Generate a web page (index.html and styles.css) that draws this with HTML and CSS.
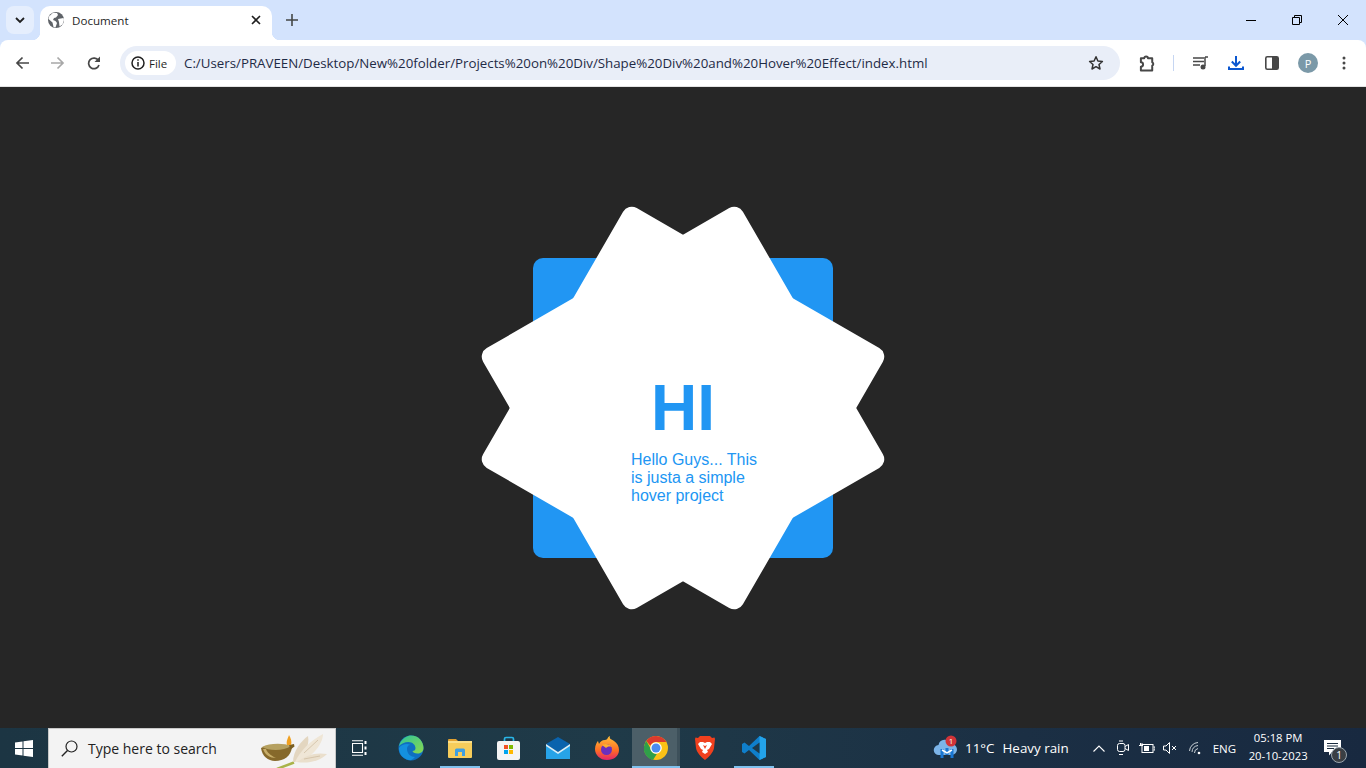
FILE: index.html
```html
<!DOCTYPE html>
<html lang="en">
<head>
    <meta charset="UTF-8">
    <title>Document</title>
    <link rel="stylesheet" href="styles.css">
</head>
<body>
    <!-- Tab strip -->
    <div class="tabstrip">
        <div class="tab-search">
            <svg width="12" height="12" viewBox="0 0 12 12"><path d="M2 4l4 4 4-4" fill="none" stroke="#1f1f1f" stroke-width="1.8"/></svg>
        </div>
        <div class="tab">
            <svg class="tab-globe" width="16" height="16" viewBox="0 0 16 16"><circle cx="8" cy="8" r="8" fill="#5f6368"/><path d="M5 .8l4 .2 1 2-2 2.500-2 .5-1 2 2.500 1 1.500 2-1.500 4.500-2-.5-1-4.500-4-3.500.5-2.500zM10 7l5.500-1 .5 2-1.500 4.500-3 2-.5-4.500z" fill="#fff"/></svg>
            <span class="tab-title">Document</span>
            <svg class="tab-close" width="10" height="10" viewBox="0 0 10 10"><path d="M1 1l8 8M9 1l-8 8" stroke="#1f1f1f" stroke-width="1.600"/></svg>
        </div>
        <svg class="new-tab" width="12" height="12" viewBox="0 0 12 12"><path d="M6 0v12M0 6h12" stroke="#444746" stroke-width="1.600"/></svg>
        <div class="window-btns">
            <svg width="12" height="12" viewBox="0 0 12 12"><path d="M1 6.500h10" stroke="#000" stroke-width="1"/></svg>
            <svg width="12" height="12" viewBox="0 0 12 12"><path d="M1.500 3.500h7v7h-7zM3.500 3.500v-2h7v7h-2" fill="none" stroke="#000"/></svg>
            <svg width="12" height="12" viewBox="0 0 12 12"><path d="M1 1l10 10M11 1l-10 10" stroke="#000" stroke-width="1"/></svg>
        </div>
    </div>

    <!-- Toolbar -->
    <div class="toolbar">
        <svg class="nav-icon" width="14" height="14" viewBox="0 0 14 14"><path d="M14 7H2M7.500 1.500L2 7l5.500 5.500" fill="none" stroke="#474747" stroke-width="1.700"/></svg>
        <svg class="nav-icon" width="14" height="14" viewBox="0 0 14 14"><path d="M0 7h12M6.500 1.500L12 7l-5.500 5.500" fill="none" stroke="#a8a8a8" stroke-width="1.700"/></svg>
        <svg class="nav-icon" width="14" height="14" viewBox="0 0 14 14"><path d="M12 9a5.300 5.300 0 1 1-.6-4.500" fill="none" stroke="#474747" stroke-width="1.700"/><path d="M13 0.500v5.500H7.500z" fill="#474747"/></svg>
        <div class="omnibox">
            <div class="file-chip">
                <svg width="14" height="14" viewBox="0 0 14 14"><circle cx="7" cy="7" r="6" fill="none" stroke="#1f1f1f" stroke-width="1.500"/><path d="M7 6v4.500M7 3.300v1.500" stroke="#1f1f1f" stroke-width="1.500"/></svg>
                <span>File</span>
            </div>
            <span class="url">C:/Users/PRAVEEN/Desktop/New%20folder/Projects%20on%20Div/Shape%20Div%20and%20Hover%20Effect/index.html</span>
            <svg class="star" width="16" height="16" viewBox="0 0 16 16"><path d="M8 1.800l1.900 4.200 4.500.5-3.400 3 1 4.500L8 11.700 4 14l1-4.500-3.400-3 4.500-.5z" fill="none" stroke="#333" stroke-width="1.500" stroke-linejoin="round"/></svg>
        </div>
        <div class="toolbar-icons">
            <svg class="slot-ext" width="17" height="17" viewBox="0 0 18 18"><path d="M2 3.500h3.500a2 2 0 0 1 4 0h4.500v4.200a2 2 0 0 1 0 3.600v5H2v-4a2.300 2.300 0 0 0 0-4.600z" fill="none" stroke="#474747" stroke-width="2.100" stroke-linejoin="round"/></svg>
            <span class="divider"></span>
            <svg class="slot-media" width="16" height="14" viewBox="0 0 16 14"><path d="M0 2h11M0 5.500h11M0 9h7" stroke="#474747" stroke-width="1.500"/><path d="M12 1v9" stroke="#474747" stroke-width="1.500"/><path d="M12 1h3" stroke="#474747" stroke-width="1.500"/><circle cx="10" cy="11" r="2.500" fill="#474747"/></svg>
            <svg class="slot-down" width="16" height="16" viewBox="0 0 16 16"><path d="M8 1v9M3.800 6.500L8 10.800l4.200-4.300" fill="none" stroke="#0b57d0" stroke-width="2"/><path d="M1 11.500v2.500h14v-2.500" fill="none" stroke="#0b57d0" stroke-width="2"/></svg>
            <svg class="slot-side" width="14" height="14" viewBox="0 0 14 14"><rect x=".8" y=".8" width="12.400" height="12.400" rx="1.500" fill="none" stroke="#474747" stroke-width="1.600"/><rect x="7" y="1" width="6" height="12" fill="#474747"/></svg>
            <span class="avatar">P</span>
            <svg class="slot-menu" width="4" height="14" viewBox="0 0 4 14"><circle cx="2" cy="2" r="1.500" fill="#474747"/><circle cx="2" cy="7" r="1.500" fill="#474747"/><circle cx="2" cy="12" r="1.500" fill="#474747"/></svg>
        </div>
    </div>

    <!-- Page -->
    <main class="page">
        <div class="shape-box">
            <div class="shape-content">
                <h2>HI</h2>
                <p>Hello Guys... This is justa a simple hover project</p>
            </div>
        </div>
    </main>

    <!-- Taskbar -->
    <footer class="taskbar">
        <div class="start">
            <svg width="18" height="17" viewBox="0 0 18 17"><path d="M0 2.500L7.500 1.400V8H0zM8.500 1.300L18 0v8H8.500zM0 9h7.500v6.600L0 14.500zM8.500 9H18v8l-9.500-1.300z" fill="#fff"/></svg>
        </div>
        <div class="search">
            <svg class="search-glass" width="17" height="17" viewBox="0 0 17 17"><circle cx="10.500" cy="6.500" r="5.500" fill="none" stroke="#222" stroke-width="1.200"/><path d="M6.500 10.500L.8 16.300" stroke="#222" stroke-width="1.400"/></svg>
            <span>Type here to search</span>
            <svg class="diya" width="70" height="40" viewBox="0 0 70 40">
                <path d="M17 40L34 33.500" stroke="#a9b34a" stroke-width="2.500" fill="none"/>
                <path d="M33 33C33 22 41 12 48 7 50 16 44 28 36 33z" fill="#e3d6c0"/>
                <path d="M35 33C40 22 50 12 63 5 63 16 50 30 38 33z" fill="#efe6d6"/>
                <path d="M37 33C46 26 56 23 67 25 60 32 48 35 37 33z" fill="#eadfcc"/>
                <path d="M44 24L58 11M44 30L60 27" stroke="#cbb99c" stroke-width=".7" fill="none"/>
                <path d="M1 19C8 15 24 15 32 18 31 27 24 32 15 32 8 32 2 27 1 19z" fill="#86692b"/>
                <path d="M3 20C5 26 10 29 16 29 10 26 7 23 6 20z" fill="#c7ad68"/>
                <path d="M2 18C9 14 24 14 31 17 24 22 9 22 2 18z" fill="#b5a060"/>
                <path d="M29 16l5-1 .5 2.500-4 3z" fill="#7a5f22"/>
                <path d="M27 16C26 12 28 9 29 6 31 9 32 13 31 16z" fill="#f0a020"/>
            </svg>
        </div>
        <div class="task-view">
            <svg width="16" height="16" viewBox="0 0 16 16"><path d="M.5 3.500h10v9h-10zM0 .8h11M0 15.200h11" fill="none" stroke="#fff" stroke-width="1.100"/><path d="M13.500 1v3M13.500 6.500v3M13.500 12v3" stroke="#fff" stroke-width="2"/></svg>
        </div>
        <div class="task-apps">
            <div class="app">
                <svg width="26" height="26" viewBox="0 0 26 26"><defs><linearGradient id="edge" x1="0" y1="0" x2="1" y2="1"><stop offset="0" stop-color="#2dc49a"/><stop offset="1" stop-color="#8ad84e"/></linearGradient></defs><circle cx="13" cy="13" r="12.500" fill="#0f6fc0"/><path d="M1 11C3 3 10 .5 13 .5 21 .5 25.500 7 25.500 13c0 3-2 5.500-6 5.500-3 0-5-1.500-5-2.500 2 0 3-1 3-3 0-3-3-6-7-6-4 0-7.500 2-9.500 4z" fill="url(#edge)"/><path d="M9 14c0 5 4 8 8 8-2 2.500-4 3.500-6 3C5 24 1 19 1 13c2-3 5-4 8-4 2 0 3 1 3 1-2 0-3 2-3 4z" fill="#1490df"/></svg>
            </div>
            <div class="app open">
                <svg width="24" height="20" viewBox="0 0 24 20"><path d="M0 2a1 1 0 0 1 1-1h7l2 2h-10z" fill="#e0a030"/><rect y="3" width="24" height="17" rx="1" fill="#f6cd5b"/><rect x="0" y="3" width="24" height="2" fill="#fbe08a"/><path d="M7 18v-6a1.500 1.500 0 0 1 1.500-1.500h7A1.500 1.500 0 0 1 17 12v6h-3v-4h-4v4z" fill="#3f9fe0"/></svg>
            </div>
            <div class="app">
                <svg width="24" height="24" viewBox="0 0 24 24"><path d="M7.500 7V3a1.500 1.500 0 0 1 1.500-1.500h6A1.500 1.500 0 0 1 16.500 3v4" fill="none" stroke="#29b6e8" stroke-width="1.700"/><rect y="5" width="23" height="19" rx="2" fill="#f4f4f4"/><rect x="7" y="9" width="4" height="4" fill="#f25022"/><rect x="12" y="9" width="4" height="4" fill="#7fba00"/><rect x="7" y="14" width="4" height="4" fill="#00a4ef"/><rect x="12" y="14" width="4" height="4" fill="#ffb900"/></svg>
            </div>
            <div class="app">
                <svg width="24" height="22" viewBox="0 0 24 22"><path d="M0 7L12 0l12 7-12 8z" fill="#0a63ad"/><path d="M0 7l12 8 12-8v3L12 18 0 10z" fill="#d9eefa"/><path d="M0 9l12 8 12-8v13H0z" fill="#27a3e8"/></svg>
            </div>
            <div class="app">
                <svg width="24" height="24" viewBox="0 0 24 24"><defs><linearGradient id="fox" x1="0" y1="0" x2="0" y2="1"><stop offset="0" stop-color="#ffc13a"/><stop offset=".6" stop-color="#ff6d24"/><stop offset="1" stop-color="#e3246b"/></linearGradient></defs><path d="M12 24C5 24 0 19 0 13 0 9 2 6 3 5l1 3c1-2 3-4 6-4 3 0 2-3 5-4-1 3 1 3 4 5 3 2 5 5 5 9 0 6-5 10-12 10z" fill="url(#fox)"/><circle cx="11.500" cy="13.500" r="5.500" fill="#6b2fbd"/><path d="M7 9c3-2 8-1 10 2-3-1-5 0-6 1-1-1-3-2-4-3z" fill="#ffb02e"/></svg>
            </div>
            <div class="app active open">
                <svg width="24" height="24" viewBox="0 0 24 24"><circle cx="12" cy="12" r="12" fill="#fbc116"/><path d="M12 0a12 12 0 0 1 10.400 6H12a6 6 0 0 0-5.600 3.700L2.300 5A12 12 0 0 1 12 0z" fill="#db3a2e"/><path d="M2.300 5l5 8.700a5.500 5.500 0 0 0 5.500 4.200L9 24A12 12 0 0 1 2.300 5z" fill="#2f9f49"/><circle cx="12" cy="12" r="5.800" fill="#fff"/><circle cx="12" cy="12" r="4.500" fill="#4a8cf0"/></svg>
            </div>
            <div class="app">
                <svg width="20" height="24" viewBox="0 0 20 24"><path d="M5 0h10l2 2 2.500-.5L20 3l-1 9c-.5 4-5 9-9 12-4-3-8.500-8-9-12L0 3l.5-1.500L3 2z" fill="#f0401e"/><path d="M5 6h3l2 1 2-1h3l2 2-3 5-2 1 1 2-3 2-3-2 1-2-2-1-3-5z" fill="#fff"/><path d="M8 9l2 1 2-1-2 4z" fill="#f0401e"/></svg>
            </div>
            <div class="app open">
                <svg width="24" height="24" viewBox="0 0 24 24"><path d="M17.500 0L24 3v18l-6.500 3L7 14l-4.500 3.500L0 16V8l2.500-1.500L7 10z" fill="#0f7fcb"/><path d="M17.500 0L24 3v18l-6.500 3V0z" fill="#23a3ea"/><path d="M17.500 6.500V17.500L10 12z" fill="#1d3a4a"/></svg>
            </div>
        </div>
        <div class="tray">
            <div class="weather">
                <svg width="26" height="26" viewBox="0 0 26 26"><path d="M6 20a5 5 0 0 1-.5-10A6.500 6.500 0 0 1 18 9a5.500 5.500 0 0 1 1 11z" fill="#7cb4e8"/><path d="M9 14v9M14 13v7M19 14v9" stroke="#1976d2" stroke-width="3"/><path d="M9 15l5 3 5-3" stroke="#fff" stroke-width="1.500" fill="none"/><circle cx="18" cy="6" r="5.500" fill="#d13438"/></svg>
                <span class="weather-badge">1</span>
            </div>
            <span class="temp">11°C</span>
            <span class="cond">Heavy rain</span>
            <svg class="tray-caret" width="12" height="7" viewBox="0 0 12 7"><path d="M.5 6.500L6 1l5.500 5.500" fill="none" stroke="#fff" stroke-width="1.100"/></svg>
            <svg class="tray-meet" width="12" height="16" viewBox="0 0 12 16"><rect x=".5" y="3.500" width="7.500" height="8" rx="2" fill="none" stroke="#fff"/><path d="M8 6.500l3.500-2v6l-3.500-2M2 1h4M2 14.500h4" fill="none" stroke="#fff"/></svg>
            <svg class="tray-batt" width="16" height="12" viewBox="0 0 16 12"><rect x="3" y="2.500" width="11" height="8" fill="none" stroke="#fff"/><rect x="5" y="4" width="5" height="5" fill="#fff"/><path d="M14.500 5h1.500v3h-1.500M0 3.500h4M1.500 1v2.500M3 1v2.500" stroke="#fff" fill="none"/></svg>
            <svg class="tray-vol" width="14" height="12" viewBox="0 0 14 12"><path d="M.5 4h2.500l3.500-3.500v11L3 8H.5z" fill="none" stroke="#fff"/><path d="M9 4l4 4M13 4l-4 4" stroke="#fff"/></svg>
            <svg class="tray-wifi" width="13" height="13" viewBox="0 0 13 13"><path d="M.5 9A9 9 0 0 1 9 .5M3 10a7 7 0 0 1 6-6.500M5.500 11A4.500 4.500 0 0 1 9 6.500" fill="none" stroke="#c9d1d6"/><circle cx="10" cy="11" r="1.300" fill="#fff"/></svg>
            <span class="lang">ENG</span>
            <div class="clock"><span>05:18 PM</span><span>20-10-2023</span></div>
            <div class="notif">
                <svg width="17" height="16" viewBox="0 0 17 16"><path d="M0 0h17v12H8l-3 3.500V12H0z" fill="#fff"/><path d="M3 3.500h11M3 6h11M3 8.500h7" stroke="#1b2c3f"/></svg>
                <span class="notif-badge">1</span>
            </div>
        </div>
    </footer>
</body>
</html>
```

FILE: styles.css
```css
* {
    box-sizing: border-box;
}
html, body {
    height: 100%;
}
body {
    margin: 0;
    display: flex;
    flex-direction: column;
    height: 768px;
    overflow: hidden;
    background-color: #d3e3fd;
    font-family: "Open Sans", "Liberation Sans", sans-serif;
}

/* tab strip */
.tabstrip {
    height: 40px;
    flex: none;
    display: flex;
    align-items: flex-end;
    background-color: #d3e3fd;
}
.tab-search {
    width: 28px;
    height: 28px;
    margin: 0 6px 6px 6px;
    display: flex;
    align-items: center;
    justify-content: center;
    border-radius: 8px;
    background-color: #e5eefd;
}
.tab {
    position: relative;
    width: 232px;
    height: 34px;
    display: flex;
    align-items: center;
    padding: 0 11px 6px 8px;
    background-color: #fff;
    border-radius: 10px 10px 0 0;
}
.tab::before, .tab::after {
    content: "";
    position: absolute;
    bottom: 0;
    width: 8px;
    height: 8px;
    background: radial-gradient(circle at 0 0, #d3e3fd 8px, #fff 8.500px);
}
.tab::before {
    left: -8px;
}
.tab::after {
    right: -8px;
    background: radial-gradient(circle at 100% 0, #d3e3fd 8px, #fff 8.500px);
}
.tab-title {
    flex: 1;
    margin-left: 8px;
    font-size: 11.600px;
    color: #1f1f1f;
}
.new-tab {
    margin: 0 0 14px 14px;
}
.window-btns {
    margin-left: auto;
    display: flex;
    gap: 34px;
    padding: 0 17px 14px 0;
}

/* toolbar */
.toolbar {
    height: 47px;
    flex: none;
    display: flex;
    align-items: center;
    padding-left: 15px;
    background-color: #fff;
    border-radius: 8px 8px 0 0;
    border-bottom: 1px solid #e3e3e3;
}
.nav-icon {
    margin-right: 22px;
    flex: none;
}
.omnibox {
    width: 1000px;
    height: 34px;
    margin-left: -3px;
    flex: none;
    display: flex;
    align-items: center;
    padding: 0 16px 0 5px;
    border-radius: 17px;
    background-color: #e9eef8;
}
.file-chip {
    width: 51px;
    height: 24px;
    display: flex;
    align-items: center;
    gap: 4px;
    padding-left: 6px;
    border-radius: 12px;
    background-color: #fff;
    font-size: 11.500px;
    color: #1f1f1f;
}
.url {
    margin-left: 8px;
    font-size: 13.300px;
    color: #1f2b46;
    white-space: nowrap;
}
.star {
    margin-left: auto;
}
.toolbar-icons {
    flex: 1;
    display: flex;
    align-items: center;
    padding-left: 19px;
}
.divider {
    width: 1px;
    height: 16px;
    margin: 0 19px 0 17px;
    background-color: #c6d6f2;
}
.slot-down {
    margin-left: 19px;
}
.slot-side {
    margin-left: 21px;
}
.avatar {
    width: 20px;
    height: 20px;
    margin-left: 19px;
    display: flex;
    align-items: center;
    justify-content: center;
    border-radius: 50%;
    background-color: #7b99a8;
    color: #fff;
    font-size: 11px;
}
.slot-menu {
    margin-left: 24px;
}

/* page */
.page {
    flex: 1;
    display: flex;
    align-items: center;
    justify-content: center;
    background-color: #262626;
    font-family: "Liberation Sans", Arial, sans-serif;
}
.shape-box {
    position: relative;
    width: 300px;
    height: 300px;
    border-radius: 10px;
    background-color: #2196f3;
}
.shape-box::before, .shape-box::after {
    content: "";
    position: absolute;
    inset: 0;
    border-radius: 10px;
    background-color: #fff;
    transform: rotate(30deg);
}
.shape-box::after {
    transform: rotate(60deg);
}
.shape-content {
    position: absolute;
    inset: 0;
    z-index: 1;
    padding-top: 113px;
    color: #2196f3;
}
.shape-content h2 {
    margin: 0 0 6px;
    font-size: 64px;
    line-height: 74px;
    text-align: center;
}
.shape-content p {
    width: 130px;
    margin: 0 0 0 98px;
    font-size: 16px;
    line-height: 18px;
}

/* taskbar */
.taskbar {
    height: 40px;
    flex: none;
    display: flex;
    align-items: stretch;
    background: linear-gradient(90deg, #1c3543 0%, #1f3a48 45%, #1b2f44 75%, #182940 100%);
    color: #fff;
}
.start {
    width: 48px;
    display: flex;
    align-items: center;
    justify-content: center;
}
.search {
    width: 288px;
    display: flex;
    align-items: center;
    padding-left: 12px;
    background-color: #f3f3f3;
    border: 1px solid #c8c8c8;
    border-bottom: 0;
    overflow: hidden;
    color: #222;
    font-size: 14px;
}
.search span {
    margin-left: 10px;
}
.diya {
    margin-left: auto;
    margin-right: 5px;
}
.task-view {
    width: 48px;
    display: flex;
    align-items: center;
    justify-content: center;
}
.task-apps {
    display: flex;
    margin-left: 2px;
}
.app {
    position: relative;
    width: 49px;
    display: flex;
    align-items: center;
    justify-content: center;
}
.app.active {
    background: linear-gradient(90deg, transparent 1px, #4c5f68 1px 46px, #3d505a 46px);
}
.app.open::after {
    content: "";
    position: absolute;
    left: 5px;
    right: 4px;
    bottom: 0;
    height: 2px;
    background-color: #7fc1ee;
}
.app.active.open::after {
    left: 1px;
    right: 0;
}
.tray {
    flex: 1;
    display: flex;
    align-items: center;
    padding-left: 155px;
    font-size: 13.400px;
}
.weather {
    position: relative;
    width: 26px;
    height: 26px;
}
.weather-badge {
    position: absolute;
    top: 1px;
    left: 15px;
    width: 6px;
    font-size: 8px;
    line-height: 10px;
    text-align: center;
}
.temp {
    margin-left: 6px;
}
.cond {
    margin-left: 8px;
}
.tray-caret {
    margin-left: 24px;
}
.tray-meet {
    margin-left: 12px;
}
.tray-batt {
    margin-left: 10px;
}
.tray-vol {
    margin-left: 8px;
}
.tray-wifi {
    margin-left: 12px;
}
.lang {
    margin-left: 11px;
    font-size: 11.500px;
}
.clock {
    width: 72px;
    margin-left: 6px;
    padding-bottom: 2px;
    display: flex;
    flex-direction: column;
    align-items: center;
    gap: 2px;
    font-size: 11.300px;
    line-height: 16px;
}
.notif {
    position: relative;
    margin-left: 10px;
    width: 17px;
    height: 16px;
}
.notif-badge {
    position: absolute;
    top: 7px;
    left: 7px;
    width: 16px;
    height: 16px;
    border-radius: 50%;
    border: 1px solid #9aa5ad;
    background-color: #3a3f44;
    font-size: 10px;
    line-height: 14px;
    text-align: center;
}
```
